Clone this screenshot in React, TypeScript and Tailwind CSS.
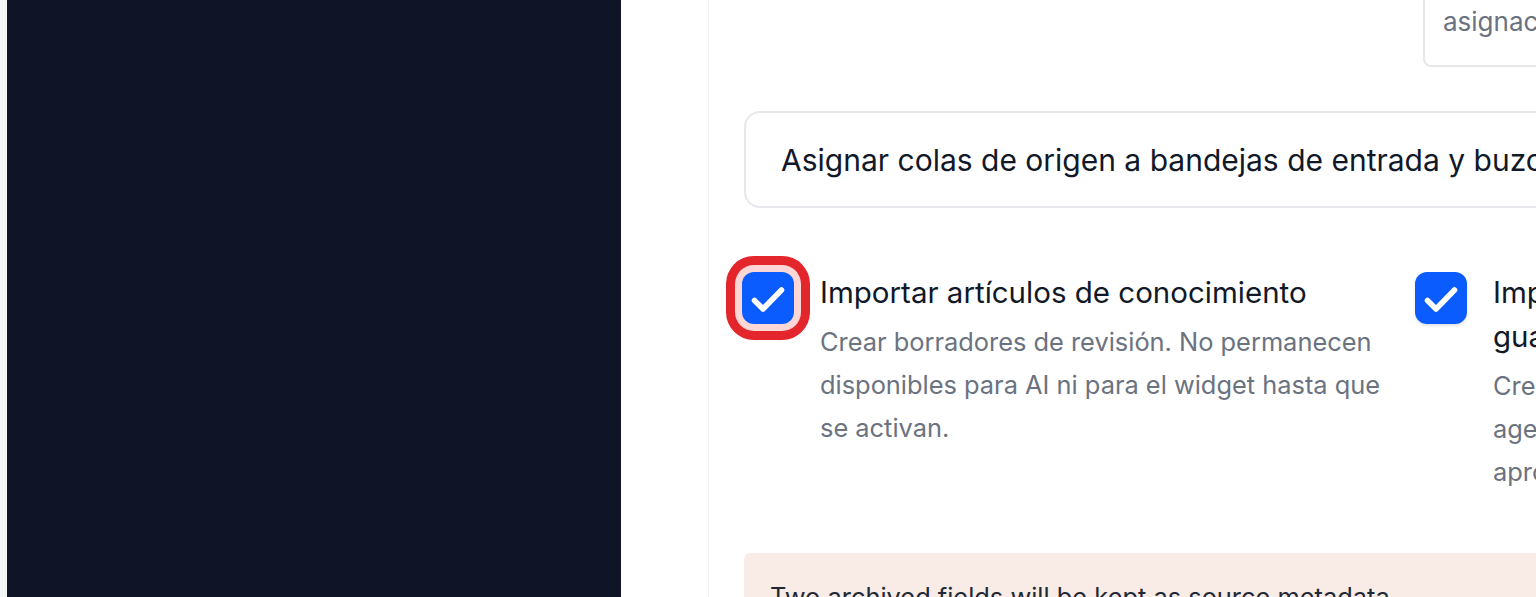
import React from 'react';

function CheckMark() {
  return (
    <svg viewBox="0 0 52 52" className="w-full h-full">
      <polyline points="12.5,28.5 21,37 39.5,18" fill="none" stroke="#ffffff" strokeWidth="5.5" strokeLinecap="round" strokeLinejoin="round" />
    </svg>
  );
}

function Option({ title, description, focused }: { title: string; description: string; focused?: boolean }) {
  return (
    <div className="flex items-start gap-[26px]">
      <div
        className={
          focused
            ? 'w-[52px] h-[52px] shrink-0 rounded-[12px] bg-[#0b5cff] shadow-[0_0_0_7px_#fdd6d6,0_0_0_16px_#e3262b]'
            : 'w-[52px] h-[52px] shrink-0 rounded-[12px] bg-[#0b5cff] shadow-[0_2px_3px_rgba(15,23,42,0.12)]'
        }
      >
        <CheckMark />
      </div>
      <div className="flex-1 min-w-0">
        <h4 className="mt-[-2px] text-[29.5px] leading-[44px] font-normal text-[#111827]">{title}</h4>
        <p className="mt-[6px] text-[25.4px] leading-[43px] text-[#6b7280]">{description}</p>
      </div>
    </div>
  );
}

export default function App() {
  return (
    <div className="flex h-[597px] w-[1536px] overflow-hidden bg-white" style={{ fontFamily: 'Inter, "Noto Sans", sans-serif' }}>
      <div className="w-[7px] shrink-0 bg-[#f4f5f7]" />
      <div className="w-[614px] shrink-0 bg-[#0f1427]" />

      <div className="flex flex-1 min-w-0">
        <div className="w-[87px] shrink-0" />
        <div className="flex-1 min-w-0 border-l border-[#f0f1f3] pl-[35px]">
          <div className="w-[1400px]">
            {/* Top field */}
            <div className="flex mt-[-30px]">
              <div className="w-[679px] shrink-0" />
              <div className="flex-1 h-[97px] border-2 border-[#e5e7eb] rounded-[8px] flex items-end pb-[26px] px-[18px]">
                <span className="text-[26px] leading-[34px] text-[#6b7280] whitespace-nowrap">asignación de colas y buzones</span>
              </div>
            </div>

            {/* Queue mapping */}
            <div className="mt-[44px] h-[97px] border-2 border-[#e5e7eb] rounded-[16px] flex items-center px-[35px]">
              <span className="text-[30px] leading-[38px] font-normal text-[#111827] whitespace-nowrap">
                Asignar colas de origen a bandejas de entrada y buzones de destino
              </span>
            </div>

            {/* Import options */}
            <div className="mt-[64px] ml-[-2px] grid grid-cols-[649px_649px] gap-x-[24px]">
              <Option
                focused
                title="Importar artículos de conocimiento"
                description="Crear borradores de revisión. No permanecen disponibles para AI ni para el widget hasta que se activan."
              />
              <Option
                title="Importar macros como respuestas guardadas"
                description="Crear respuestas guardadas en borrador para agentes. No se muestran hasta que reciben su aprobación."
              />
            </div>

            {/* Note */}
            <div className="mt-[60px] bg-[#f9ece7] rounded-t-[6px] px-[26px] pt-[28px] pb-[28px]">
              <p className="text-[25.4px] leading-[32px] text-[#1f2937]">Two archived fields will be kept as source metadata.</p>
            </div>
          </div>
        </div>
      </div>
    </div>
  );
}
